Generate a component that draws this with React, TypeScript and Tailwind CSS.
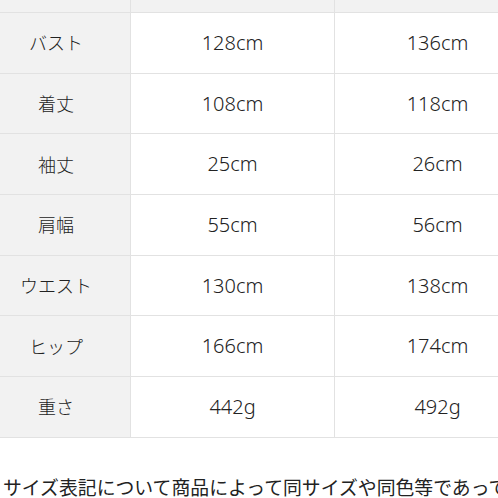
import React from "react";

const rows: [string, string, string][] = [
  ["バスト", "128cm", "136cm"],
  ["着丈", "108cm", "118cm"],
  ["袖丈", "25cm", "26cm"],
  ["肩幅", "55cm", "56cm"],
  ["ウエスト", "130cm", "138cm"],
  ["ヒップ", "166cm", "174cm"],
  ["重さ", "442g", "492g"],
];

export default function App() {
  return (
    <div className="w-[498px] h-[498px] overflow-hidden bg-white text-[#222] [font-family:'Noto_Sans','Noto_Sans_CJK_JP',sans-serif]">
      <div className="ml-[-18px] w-[558px]">
        <div className="grid grid-cols-[149px_204px_205px]">
          <div className="h-[13px] bg-[#f2f2f2] border-b border-r border-[#e2e2e2]" />
          <div className="h-[13px] bg-[#f2f2f2] border-b border-r border-[#e2e2e2]" />
          <div className="h-[13px] bg-[#f2f2f2] border-b border-[#e2e2e2]" />
          {rows.map(([label, a, b], i) => (
            <React.Fragment key={i}>
              <div className="h-[60.7px] bg-[#f2f2f2] border-b border-r border-[#e2e2e2] flex items-center justify-center text-[18px] font-light [font-family:'Noto_Sans_CJK_JP',sans-serif]">
                {label}
              </div>
              <div className="h-[60.7px] bg-white border-b border-r border-[#e2e2e2] flex items-center justify-center text-[20px] font-light">
                {a}
              </div>
              <div className="h-[60.7px] bg-white border-b border-[#e2e2e2] flex items-center justify-center text-[20px] font-light">
                {b}
              </div>
            </React.Fragment>
          ))}
        </div>
      </div>
      <div className="mt-[40px] pl-[3px] whitespace-nowrap text-[18.85px] leading-none text-[#222] [font-family:'Noto_Sans_CJK_JP',sans-serif]">
        サイズ表記について商品によって同サイズや同色等であって
      </div>
    </div>
  );
}
